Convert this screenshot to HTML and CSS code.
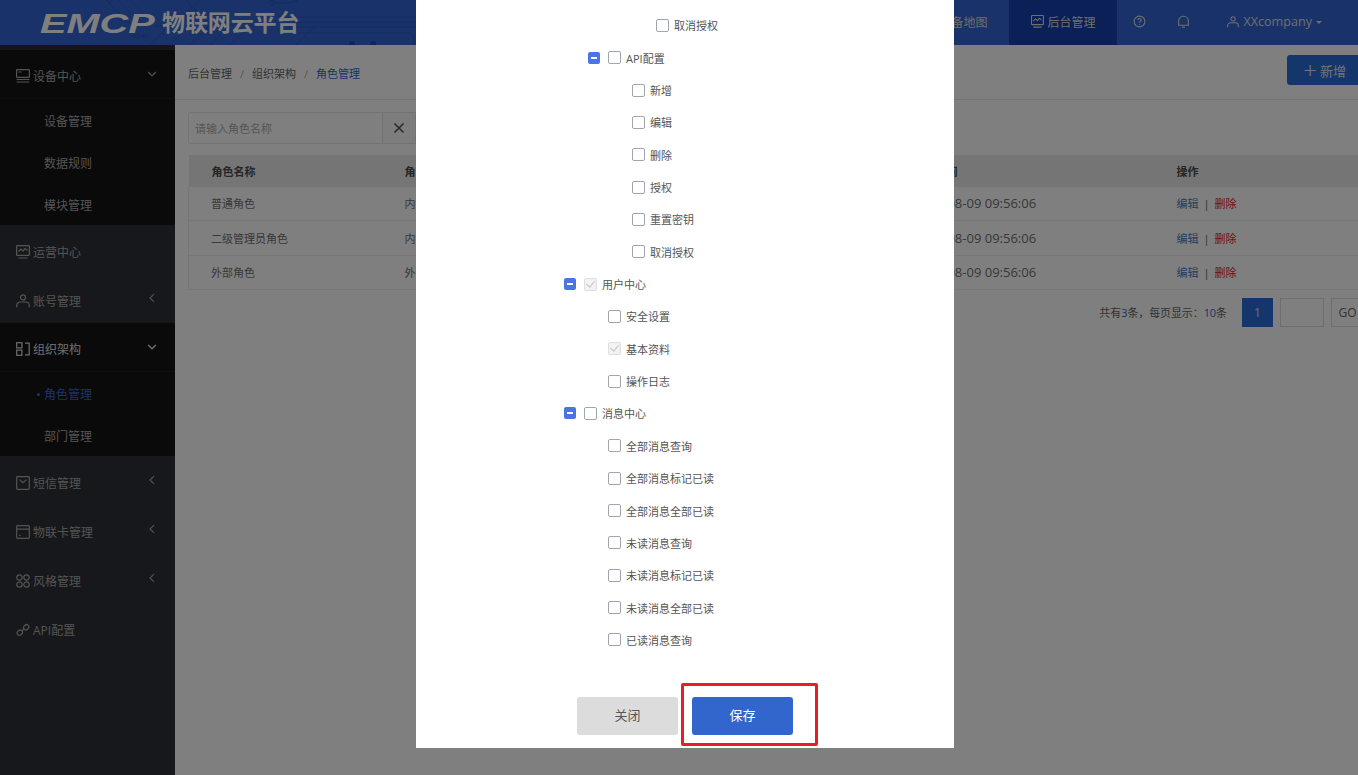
FILE: index.html

```html
<!DOCTYPE html>
<html lang="zh-CN">
<head>
    <meta charset="UTF-8">
    <meta name="viewport" content="width=device-width, initial-scale=1.0">
    <title>EMCP 物联网云平台 - 角色管理</title>
    <link rel="stylesheet" href="styles.css">
</head>
<body>
    <svg class="sprite" aria-hidden="true">
        <symbol id="i-device" viewBox="0 0 14 14"><rect x="0.6" y="0.6" width="12.8" height="7.8" rx="0.6"/><path d="M2.5 3h3M0.6 10.5h12.8M0.6 13h12.8"/></symbol>
        <symbol id="i-monitor" viewBox="0 0 14 14"><rect x="0.6" y="0.6" width="12.8" height="9.8" rx="0.6"/><path d="M2.5 6.5l2.5-2.5 2 2 2-2.5 2.5 2M2.5 13h9"/></symbol>
        <symbol id="i-user" viewBox="0 0 14 14"><circle cx="7" cy="3.4" r="2.5"/><path d="M0.8 13.2v-1.8c0-2 1.6-3.4 3.4-3.4h5.6c1.8 0 3.4 1.4 3.4 3.4v1.8"/></symbol>
        <symbol id="i-org" viewBox="0 0 14 14"><rect x="0.7" y="0.7" width="5.2" height="5.2"/><rect x="0.7" y="8.1" width="5.2" height="5.2"/><path d="M9 1.2h4.2v11.6H9"/></symbol>
        <symbol id="i-mail" viewBox="0 0 14 14"><rect x="0.7" y="0.7" width="12.6" height="12.6" rx="0.8"/><path d="M3.6 3.6L7 6.6l3.4-3"/></symbol>
        <symbol id="i-card" viewBox="0 0 14 14"><rect x="0.7" y="0.7" width="12.6" height="12.6" rx="0.8"/><path d="M0.7 4.2h12.6M3 10.3h1.6"/></symbol>
        <symbol id="i-grid" viewBox="0 0 14 14"><circle cx="3.5" cy="3.5" r="2.7"/><circle cx="10.5" cy="3.5" r="2.7"/><circle cx="3.5" cy="10.5" r="2.7"/><circle cx="10.5" cy="10.5" r="2.7"/></symbol>
        <symbol id="i-link" viewBox="0 0 14 14"><rect x="1" y="7.4" width="5.6" height="4.6" rx="2.3" transform="rotate(-45 3.8 9.7)"/><rect x="7.4" y="2" width="5.6" height="4.6" rx="2.3" transform="rotate(-45 10.2 4.3)"/><path d="M5.8 8.2l2.4-2.4"/></symbol>
        <symbol id="i-down" viewBox="0 0 10 10"><path d="M1.2 3l3.8 3.8L8.8 3"/></symbol>
        <symbol id="i-left" viewBox="0 0 10 10"><path d="M7 1.2L3 5l4 3.8"/></symbol>
        <symbol id="i-help" viewBox="0 0 14 14"><circle cx="7" cy="7" r="5.8"/><path d="M5.2 5.5c0-1 .8-1.7 1.8-1.7s1.8.7 1.8 1.6c0 1.5-1.8 1.5-1.8 3M7 9.6v1"/></symbol>
        <symbol id="i-bell" viewBox="0 0 14 14"><path d="M1.8 11V6.5C1.8 3.5 4 1.3 7 1.3s5.2 2.2 5.2 5.2V11zM1 11h12M5.6 13h2.8"/></symbol>
    </svg>

    <div class="page">
        <header class="topbar">
            <svg class="circuit" viewBox="0 0 416 45" aria-hidden="true">
                <path d="M106 0l32 32M118 0l30 30M130 0l26 26h10M186 0l18 18M200 0l-16 14M272 3h18l8-3M128 36h18M150 45l30-30M170 45l26-26M190 45l20-20M210 45l16-16M296 45l20-20M230 45l12-12M288 17h128M292 22h124M288 27h128M298 33h112l4 4v8"/>
                <circle cx="137" cy="36" r="2.4"/><circle cx="145" cy="36" r="2.4"/><circle cx="272" cy="3" r="2.6"/><circle cx="110" cy="1" r="2"/>
                <circle class="dot" cx="352" cy="44" r="3"/><circle class="dot" cx="373" cy="44" r="3"/>
            </svg>
            <div class="logo"><span class="logo-mark">EMCP</span><span class="logo-name">物联网云平台</span></div>
            <nav class="topnav">
                <a class="nav-item" href="#"><svg class="icon"><use href="#i-device"/></svg>设备地图</a>
                <a class="nav-item active" href="#"><svg class="icon"><use href="#i-monitor"/></svg>后台管理</a>
                <a class="nav-tool" href="#"><svg class="icon"><use href="#i-help"/></svg></a>
                <a class="nav-tool" href="#"><svg class="icon"><use href="#i-bell"/></svg></a>
                <a class="nav-user" href="#"><svg class="icon small"><use href="#i-user"/></svg>XXcompany<i class="caret"></i></a>
            </nav>
        </header>

        <div class="layout">
            <aside class="sidebar">
                <a class="menu-item open" href="#"><svg class="icon"><use href="#i-device"/></svg><span>设备中心</span><svg class="chev"><use href="#i-down"/></svg></a>
                <div class="submenu">
                    <a href="#">设备管理</a>
                    <a href="#">数据规则</a>
                    <a href="#">模块管理</a>
                </div>
                <a class="menu-item" href="#"><svg class="icon"><use href="#i-monitor"/></svg><span>运营中心</span></a>
                <a class="menu-item" href="#"><svg class="icon"><use href="#i-user"/></svg><span>账号管理</span><svg class="chev"><use href="#i-left"/></svg></a>
                <a class="menu-item open current" href="#"><svg class="icon"><use href="#i-org"/></svg><span>组织架构</span><svg class="chev"><use href="#i-down"/></svg></a>
                <div class="submenu">
                    <a class="selected" href="#">角色管理</a>
                    <a href="#">部门管理</a>
                </div>
                <a class="menu-item" href="#"><svg class="icon"><use href="#i-mail"/></svg><span>短信管理</span><svg class="chev"><use href="#i-left"/></svg></a>
                <a class="menu-item" href="#"><svg class="icon"><use href="#i-card"/></svg><span>物联卡管理</span><svg class="chev"><use href="#i-left"/></svg></a>
                <a class="menu-item" href="#"><svg class="icon"><use href="#i-grid"/></svg><span>风格管理</span><svg class="chev"><use href="#i-left"/></svg></a>
                <a class="menu-item" href="#"><svg class="icon"><use href="#i-link"/></svg><span>API配置</span></a>
            </aside>

            <main class="main">
                <div class="crumbbar">
                    <div class="crumbs">
                        <a href="#">后台管理</a><em>/</em><a href="#">组织架构</a><em>/</em><a class="here" href="#">角色管理</a>
                    </div>
                    <button class="btn-add"><span class="plus">+</span>新增</button>
                </div>
                <div class="content">
                    <div class="search">
                        <input type="text" placeholder="请输入角色名称">
                        <button class="search-clear">
                            <svg viewBox="0 0 12 12"><path d="M1.5 1.5l9 9M10.5 1.5l-9 9"/></svg>
                        </button>
                    </div>
                    <table class="roles">
                        <thead>
                            <tr><th class="col-name">角色名称</th><th class="col-type">角色类型</th><th class="col-time">创建时间</th><th>操作</th></tr>
                        </thead>
                        <tbody>
                            <tr><td>普通角色</td><td>内部角色</td><td class="time">2021-08-09 09:56:06</td><td><a class="edit" href="#">编辑</a><span class="sep">|</span><a class="del" href="#">删除</a></td></tr>
                            <tr><td>二级管理员角色</td><td>内部角色</td><td class="time">2021-08-09 09:56:06</td><td><a class="edit" href="#">编辑</a><span class="sep">|</span><a class="del" href="#">删除</a></td></tr>
                            <tr><td>外部角色</td><td>外部角色</td><td class="time">2021-08-09 09:56:06</td><td><a class="edit" href="#">编辑</a><span class="sep">|</span><a class="del" href="#">删除</a></td></tr>
                        </tbody>
                    </table>
                    <div class="pager">
                        <span class="pager-info">共有<b>3</b>条，每页显示：<b>10</b>条</span>
                        <a class="page-num" href="#">1</a>
                        <input class="page-input" type="text">
                        <button class="page-go">GO</button>
                    </div>
                </div>
            </main>
        </div>
    </div>

    <div class="mask">
        <div class="modal">
            <ul class="tree">
                <li>
                    <ul>
                        <li>
                            <ul>
                                <li>
                                    <ul>
                                        <li><div class="node"><i class="switch none"></i><input type="checkbox"><label>取消授权</label></div></li>
                                    </ul>
                                </li>
                            </ul>
                        </li>
                        <li>
                            <div class="node"><i class="switch"></i><input type="checkbox"><label>API配置</label></div>
                            <ul>
                                <li><div class="node"><i class="switch none"></i><input type="checkbox"><label>新增</label></div></li>
                                <li><div class="node"><i class="switch none"></i><input type="checkbox"><label>编辑</label></div></li>
                                <li><div class="node"><i class="switch none"></i><input type="checkbox"><label>删除</label></div></li>
                                <li><div class="node"><i class="switch none"></i><input type="checkbox"><label>授权</label></div></li>
                                <li><div class="node"><i class="switch none"></i><input type="checkbox"><label>重置密钥</label></div></li>
                                <li><div class="node"><i class="switch none"></i><input type="checkbox"><label>取消授权</label></div></li>
                            </ul>
                        </li>
                    </ul>
                </li>
                <li>
                    <div class="node"><i class="switch"></i><input type="checkbox" checked disabled><label>用户中心</label></div>
                    <ul>
                        <li><div class="node"><i class="switch none"></i><input type="checkbox"><label>安全设置</label></div></li>
                        <li><div class="node"><i class="switch none"></i><input type="checkbox" checked disabled><label>基本资料</label></div></li>
                        <li><div class="node"><i class="switch none"></i><input type="checkbox"><label>操作日志</label></div></li>
                    </ul>
                </li>
                <li>
                    <div class="node"><i class="switch"></i><input type="checkbox"><label>消息中心</label></div>
                    <ul>
                        <li><div class="node"><i class="switch none"></i><input type="checkbox"><label>全部消息查询</label></div></li>
                        <li><div class="node"><i class="switch none"></i><input type="checkbox"><label>全部消息标记已读</label></div></li>
                        <li><div class="node"><i class="switch none"></i><input type="checkbox"><label>全部消息全部已读</label></div></li>
                        <li><div class="node"><i class="switch none"></i><input type="checkbox"><label>未读消息查询</label></div></li>
                        <li><div class="node"><i class="switch none"></i><input type="checkbox"><label>未读消息标记已读</label></div></li>
                        <li><div class="node"><i class="switch none"></i><input type="checkbox"><label>未读消息全部已读</label></div></li>
                        <li><div class="node"><i class="switch none"></i><input type="checkbox"><label>已读消息查询</label></div></li>
                    </ul>
                </li>
            </ul>
            <div class="modal-foot">
                <button class="btn-close">关闭</button>
                <button class="btn-save">保存</button>
                <span class="callout"></span>
            </div>
        </div>
    </div>
</body>
</html>
```

FILE: styles.css

```css
* { margin: 0; padding: 0; box-sizing: border-box; }
html, body { height: 100%; overflow: hidden; }
body { font-family: "Open Sans", "Noto Sans CJK SC", sans-serif; font-size: 11px; color: #707070; background: #fff; }
a { text-decoration: none; color: inherit; }
ul { list-style: none; }
button { font-family: inherit; border: none; cursor: pointer; }
.sprite { display: none; }

.page { width: 1370px; height: 775px; display: flex; flex-direction: column; }

/* top bar */
.topbar { position: relative; flex: none; height: 45px; display: flex; justify-content: space-between; background: #3264d2; color: #fff; }
.circuit { position: absolute; left: 0; top: 0; width: 416px; height: 45px; fill: none; stroke: #2c58ba; stroke-width: 1; }
.circuit .dot { fill: #234a9f; stroke: none; }
.logo { position: relative; display: flex; align-items: center; padding-left: 40px; height: 45px; }
.logo-mark { display: inline-block; width: 122px; margin-top: 3px; font-family: "Liberation Sans", sans-serif; font-size: 27px; font-weight: bold; font-style: italic; transform: scaleX(1.47); transform-origin: left center; }
.logo-name { margin-bottom: 3px; font-family: "Noto Sans CJK SC", sans-serif; font-size: 23px; font-weight: bold; letter-spacing: -0.1px; }

.topnav { position: relative; display: flex; align-items: stretch; font-size: 12px; padding-right: 48px; }
.nav-item { display: flex; align-items: center; padding: 0 22px 2px; gap: 3px; color: #ddd; }
.nav-item.active { background: #1440ac; }
.nav-tool { display: flex; align-items: center; justify-content: center; width: 44px; padding-bottom: 2px; color: #ddd; }
.nav-user { display: flex; align-items: center; padding: 0 0 2px 22px; color: #ddd; font-size: 12.6px; }
.nav-user .icon { margin-right: 4px; }
.caret { width: 0; height: 0; margin-left: 4px; margin-top: 2px; border: 3.5px solid transparent; border-top-color: #ddd; border-bottom: 0; }
.icon { width: 13px; height: 13px; fill: none; stroke: currentColor; stroke-width: 1.2; flex: none; }
.icon.small { width: 12px; height: 12px; }

/* side menu */
.layout { flex: 1; display: flex; min-height: 0; }
.sidebar { width: 175px; flex: none; background: #2e3036; padding-top: 5px; font-size: 12px; color: #a8a8a8; box-shadow: inset 0 5px 0 #2c2c2c; }
.menu-item { position: relative; display: flex; align-items: center; height: 49px; padding: 4px 0 0 16px; gap: 3px; }
.menu-item .icon { width: 14px; height: 14px; stroke-width: 1.2; }
.menu-item.open { background: #141415; border-bottom: 1px solid #1f1f21; }
.menu-item.current { color: #dcdcdc; }
.chev { position: absolute; left: 147px; top: 19px; width: 10px; height: 10px; fill: none; stroke: currentColor; stroke-width: 1.1; }
.menu-item.current .chev { stroke-width: 1.4; }
.submenu { background: #141415; }
.submenu a { display: flex; align-items: center; height: 42px; padding: 2px 0 0 44px; }
.submenu a.selected { position: relative; color: #3768d0; }
.submenu a.selected::before { content: ""; position: absolute; left: 37px; top: 21px; width: 3px; height: 3px; border-radius: 50%; background: #3768d0; }

/* main column */
.main { flex: 1; min-width: 0; display: flex; flex-direction: column; }
.crumbbar { flex: none; height: 55px; display: flex; justify-content: space-between; padding: 10px 0 0 13px; border-bottom: 1px solid #e6e6e6; }
.crumbs { display: flex; gap: 8px; margin-top: 10px; line-height: 17px; color: #666; }
.crumbs em { font-style: normal; color: #aaa; }
.crumbs .here { color: #3366cc; }
.btn-add { width: 83px; height: 30px; padding-right: 24px; border-radius: 3px 0 0 3px; background: #2a6cd8; color: #e6e6e6; font-size: 13px; text-align: right; }
.plus { font-size: 24px; font-weight: 300; line-height: 13px; margin-right: 3px; vertical-align: -3px; }
.content { padding: 12px 0 0 13px; }
.search { display: flex; height: 32px; width: 240px; }
.search input { width: 195px; height: 32px; padding-left: 6px; border: 1px solid #e6e6e6; border-radius: 3px 0 0 3px; font: inherit; outline: none; }
.search input::placeholder { color: #aaa; }
.search-clear { width: 33px; height: 32px; background: #fafafa; border: 1px solid #e6e6e6; border-left: 0; display: flex; align-items: center; justify-content: center; }
.search-clear svg { width: 12px; height: 12px; fill: none; stroke: #555; stroke-width: 1.6; }

.roles { width: 100%; margin-top: 11px; border-collapse: collapse; table-layout: fixed; }
.roles th { height: 31.5px; padding-left: 23px; text-align: left; font-weight: bold; background: #ebebeb; color: #4c4c4c; }
.roles td { height: 34.4px; padding-left: 23px; border-bottom: 1px solid #eee; color: #707070; }
.roles td:first-child { padding-left: 22px; border-left: 1px solid #eee; }
.roles .time { font-size: 13px; }
.col-name { width: 193px; }
.col-type { width: 509px; }
.col-time { width: 263px; }
.roles td .edit { color: #4a78c8; }
.roles td .del { color: #e0222e; }
.sep { margin: 0 5px; color: #666; }

.pager { display: flex; align-items: stretch; justify-content: flex-end; height: 29px; margin-top: 7.5px; padding-right: 6px; }
.pager-info { align-self: center; margin-right: 15px; font-size: 10.9px; color: #666; }
.pager-info b { font-weight: normal; color: #3366cc; }
.page-num { width: 31px; display: flex; align-items: center; justify-content: center; background: #2a6cd8; color: #ddd; font-size: 12px; }
.page-input { width: 44px; margin-left: 7px; border: 1px solid #ddd; outline: none; }
.page-go { width: 33px; margin-left: 7px; background: #fff; border: 1px solid #ddd; color: #666; font-size: 12px; }

/* dialog */
.mask { position: fixed; left: 0; top: 0; right: 0; bottom: 0; padding-left: 416px; background: rgba(0, 0, 0, 0.5); }
.modal { width: 538px; height: 748px; padding-top: 9.2px; background: #fff; overflow: hidden; color: #555; }
.tree { padding-left: 148px; }
.tree ul { padding-left: 24px; }
.node { display: flex; align-items: center; height: 32.35px; }
.node label { margin-left: 5px; }
.switch { position: relative; flex: none; width: 12px; height: 12px; margin-right: 8px; border-radius: 2px; background: #4a76e4; }
.switch::after { content: ""; position: absolute; left: 3px; top: 5px; width: 6px; height: 2px; background: #fff; }
.switch.none { background: none; }
.switch.none::after { display: none; }
.node input { appearance: none; flex: none; position: relative; width: 13px; height: 13px; border: 1.5px solid #a0a4ae; border-radius: 2px; background: #fff; }
.node input:checked { background: #f2f2f2; border-color: #dedede; }
.node input:checked::after { content: ""; position: absolute; left: 3px; top: 0; width: 4px; height: 7px; border: solid #c4c4c4; border-width: 0 1px 1px 0; transform: rotate(40deg); }

.modal-foot { position: relative; display: flex; justify-content: center; gap: 14px; margin-top: 40.8px; }
.modal-foot button { width: 101px; height: 38px; padding-bottom: 2px; border-radius: 3px; font-size: 13px; }
.btn-close { background: #dcdcdc; color: #555; }
.btn-save { background: #3366cc; color: #fff; }
.callout { position: absolute; left: 265px; top: -14px; width: 137px; height: 63px; border: 3px solid #ea1c28; border-radius: 2px; pointer-events: none; }
```
